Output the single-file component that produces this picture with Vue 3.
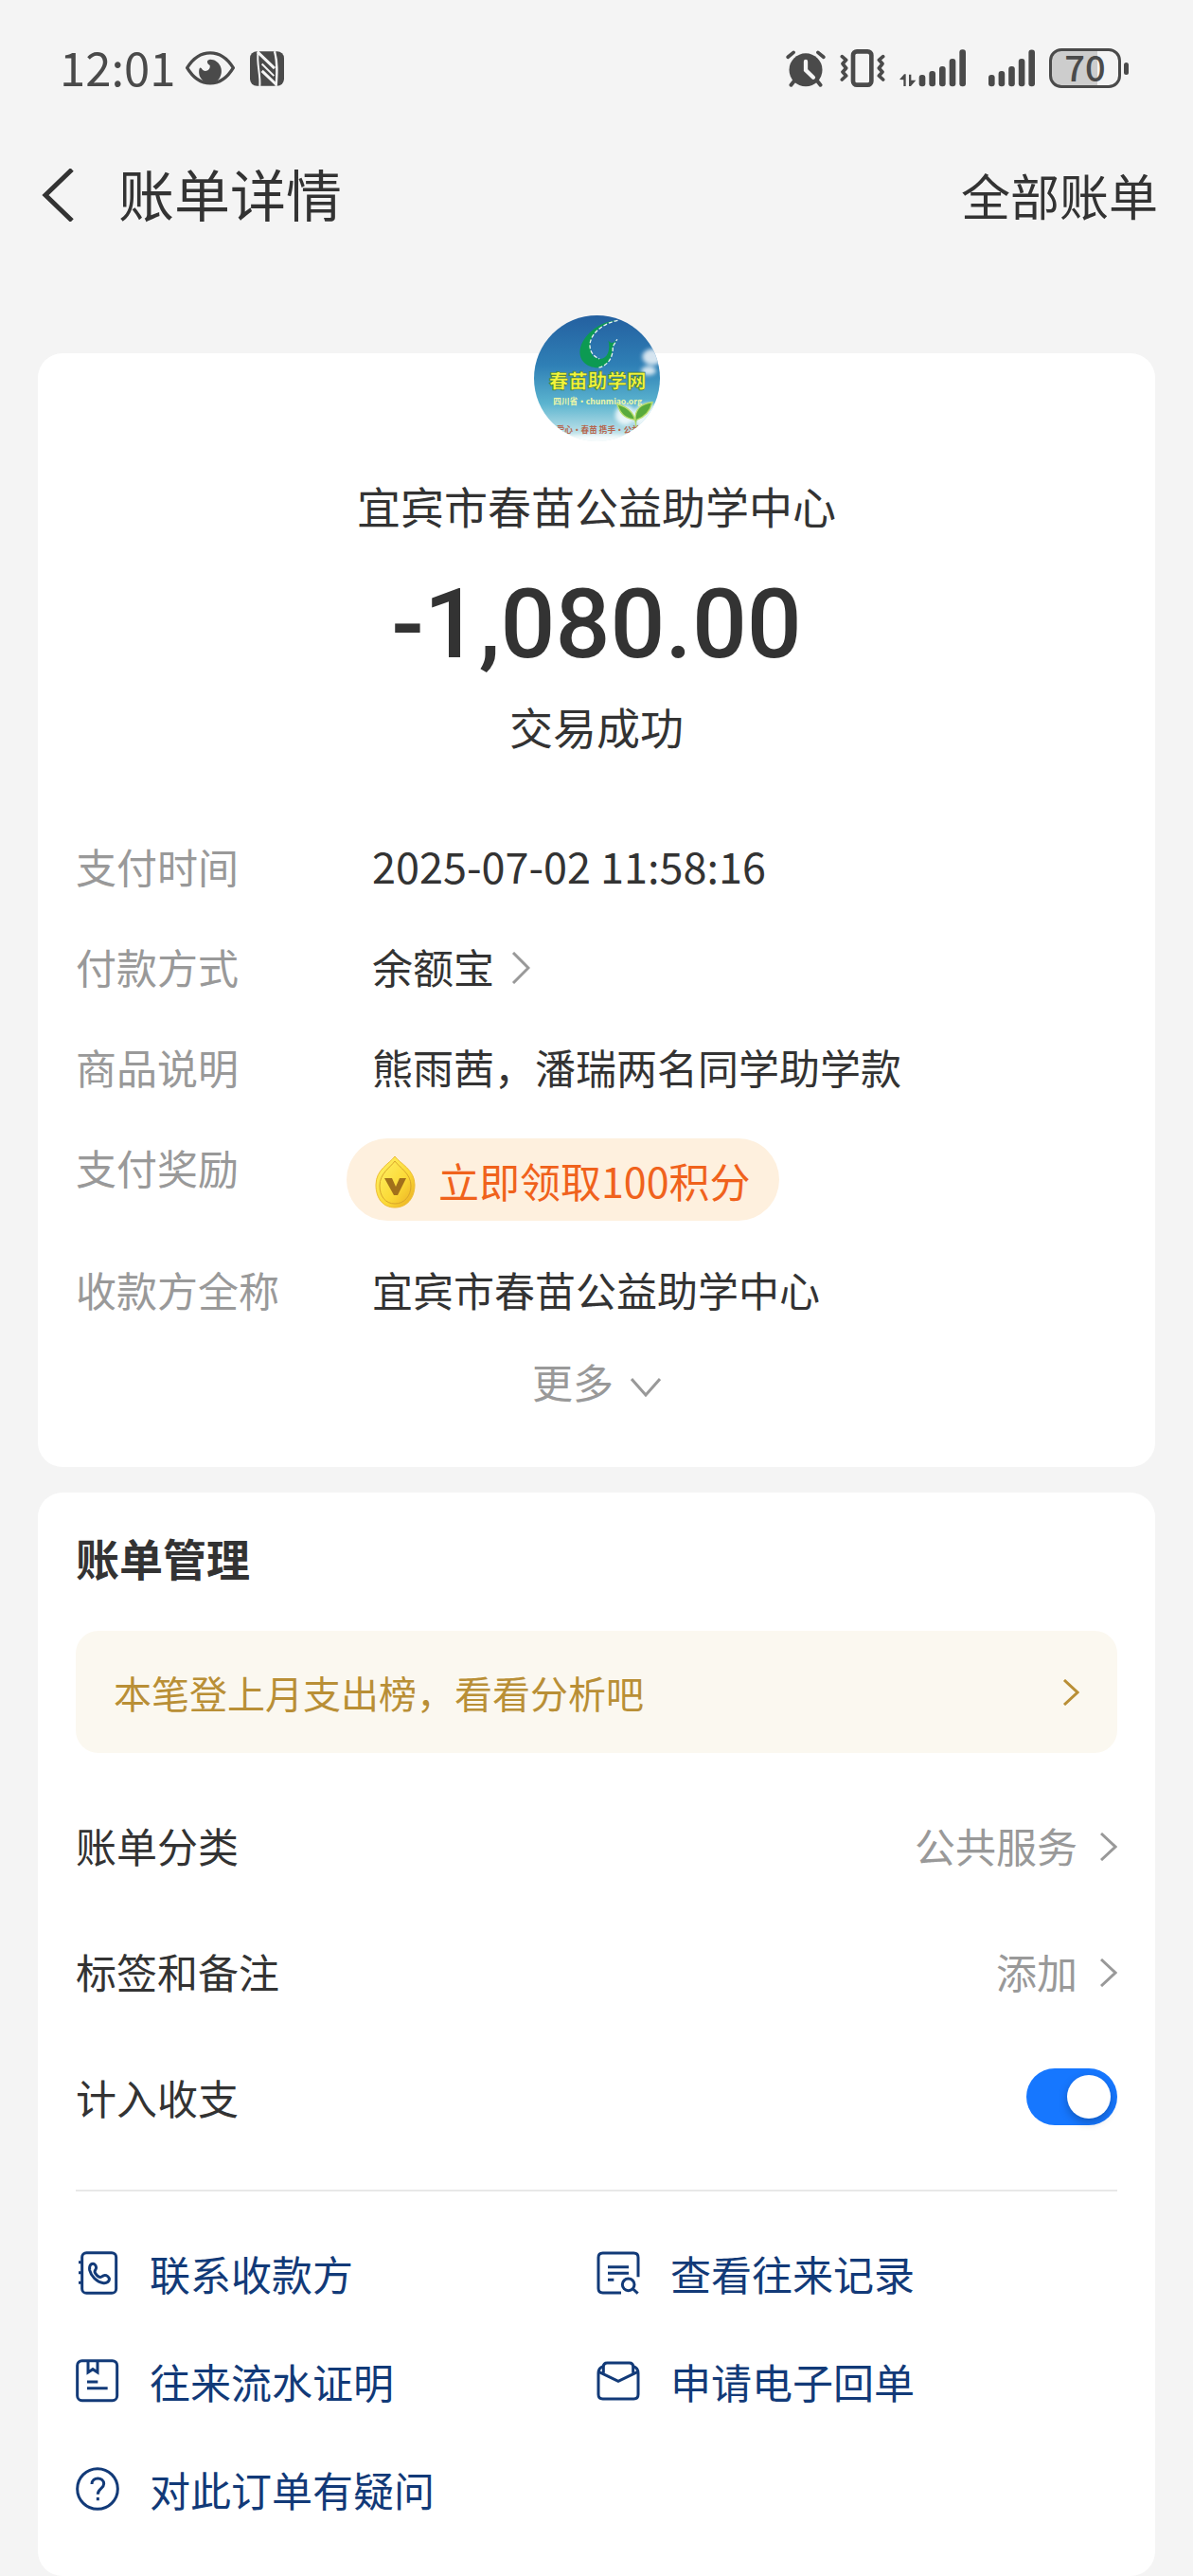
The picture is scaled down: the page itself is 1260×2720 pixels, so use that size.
<template>
  <div class="page">
    <div class="status-bar">
      <div class="status-group">
        <span class="clock">12:01</span>
        <svg class="eye" width="52" height="36" viewBox="0 0 156 108" fill="none">
          <path d="M5 53C44-10 112-10 151 53C112 118 44 118 5 53Z" stroke="#4a4a4a" stroke-width="10" />
          <path d="M78 26C64 28 68 40 77 45C80 62 58 70 50 54C42 46 40 70 46 82C58 106 92 108 106 88C126 60 106 26 78 26Z" fill="#4a4a4a" />
        </svg>
        <svg class="nfc" width="36" height="37" viewBox="0 0 108 110">
          <rect width="108" height="110" rx="22" fill="#4a4a4a" />
          <g fill="none" stroke="#f5f5f5">
            <path d="M26 0C20 40 34 70 31 110" stroke-width="6" />
            <path d="M78 0C88 36 86 70 83 110" stroke-width="7" />
            <path d="M24 2L78 54M38 62L84 106" stroke-width="9" />
            <path d="M38 40L76 78" stroke-width="6" />
          </g>
        </svg>
      </div>
      <div class="status-group right">
        <svg width="42" height="39" viewBox="0 0 126 118" fill="none" stroke="#4a4a4a" stroke-linecap="round">
          <circle cx="63" cy="63" r="53" fill="#4a4a4a" stroke="none" />
          <path d="M6 22L24 7M102 7L120 22" stroke-width="11" />
          <path d="M28 96L16 111M98 96L110 111" stroke-width="12" />
          <path d="M63 36V64L87 87" stroke="#f5f5f5" stroke-width="13" />
        </svg>
        <svg class="vibrate" width="48" height="40" viewBox="0 0 144 120" fill="none" stroke="#4a4a4a">
          <rect x="42" y="7" width="58" height="106" rx="12" stroke-width="14" />
          <g stroke-width="11" stroke-linejoin="round" stroke-linecap="round">
            <path d="M7 23L20 34L9 46L20 60L9 72L20 84L7 96" />
            <path d="M137 23L124 34L135 46L124 60L135 72L124 84L137 96" />
          </g>
        </svg>
        <svg class="signal" width="70" height="40" viewBox="0 0 210 120">
          <path d="M0 96L15 79H20V117H13V97ZM30 80H37V98H52L36 117H30Z" fill="#4a4a4a" />
          <rect v-for="bar in bars" :key="bar.x" :x="bar.x + 62" :y="bar.y" width="20" :height="118 - bar.y" rx="9" fill="#4a4a4a" />
        </svg>
        <svg class="signal-second" width="49" height="40" viewBox="0 0 148 120">
          <rect v-for="bar in bars" :key="bar.x" :x="bar.x" :y="bar.y" width="20" :height="118 - bar.y" rx="9" fill="#4a4a4a" />
        </svg>
        <div class="battery">70</div>
        <span class="battery-tip"></span>
      </div>
    </div>

    <header class="nav-bar">
      <button class="back" aria-label="返回">
        <svg width="34" height="56" viewBox="0 0 34 56" fill="none" stroke="#333" stroke-width="5">
          <path d="M32 1L4 28L32 55" />
        </svg>
      </button>
      <h1>账单详情</h1>
      <a href="#" class="all-bills">全部账单</a>
    </header>

    <main>
      <section class="card summary">
        <svg class="avatar" width="133" height="133" viewBox="0 0 200 200" role="img" aria-label="春苗助学网">
          <defs>
            <linearGradient id="sky" x1="0" y1="0" x2="0" y2="1">
              <stop offset="0" stop-color="#2460a0" />
              <stop offset="0.4" stop-color="#2f80b6" />
              <stop offset="0.7" stop-color="#5bb4cf" />
              <stop offset="1" stop-color="#d9eef0" />
            </linearGradient>
            <clipPath id="round"><circle cx="100" cy="100" r="100" /></clipPath>
            <filter id="soft"><feGaussianBlur stdDeviation="3" /></filter>
          </defs>
          <g clip-path="url(#round)">
            <rect width="200" height="200" fill="url(#sky)" />
            <g fill="#fff" filter="url(#soft)" opacity="0.8">
              <ellipse cx="188" cy="66" rx="16" ry="13" />
              <ellipse cx="182" cy="88" rx="12" ry="7" />
              <circle cx="145" cy="158" r="16" />
              <ellipse cx="180" cy="160" rx="22" ry="20" />
              <ellipse cx="100" cy="198" rx="70" ry="9" />
            </g>
            <path d="M133 8C104 10 82 28 74 50C68 72 86 84 103 83C100 80 96 72 92 62C84 46 92 30 104 20C112 14 122 10 133 8Z" fill="#0c9a52" />
            <path d="M92 62C96 74 100 82 103 83C118 80 124 66 125 50L132 38C126 46 121 44 118 40C122 56 116 70 104 69C98 68 94 66 92 62Z" fill="#0c9a52" />
            <path d="M133 8C112 12 92 26 89 44C87 58 96 66 104 69M103 83C122 78 126 60 125 50L132 38" fill="none" stroke="#e8f5f0" stroke-width="2" stroke-dasharray="6 3" />
            <text x="101" y="116" class="avatar-name">春苗助学网</text>
            <text x="101" y="141" class="avatar-url">四川省·chunmiao.org</text>
            <path d="M162 178C162 158 152 146 132 141C138 160 148 164 161 166C160 150 170 140 188 138C184 154 174 162 163 166" fill="#58aa3c" stroke="#b8dc6c" stroke-width="2" />
            <text x="102" y="187" class="avatar-slogan">爱心·春苗 携手·公益</text>
          </g>
        </svg>
        <p class="payee">宜宾市春苗公益助学中心</p>
        <p class="amount">-1,080.00</p>
        <p class="state">交易成功</p>

        <dl class="details">
          <div class="detail">
            <dt>支付时间</dt>
            <dd class="time">2025-07-02 11:58:16</dd>
          </div>
          <div class="detail">
            <dt>付款方式</dt>
            <dd>
              <button class="method">
                余额宝
                <svg class="arrow" width="20" height="34" viewBox="0 0 20 34" fill="none" stroke="#999" stroke-width="3">
                  <path d="M2 1L18 17L2 33" />
                </svg>
              </button>
            </dd>
          </div>
          <div class="detail">
            <dt>商品说明</dt>
            <dd>熊雨茜，潘瑞两名同学助学款</dd>
          </div>
          <div class="detail">
            <dt>支付奖励</dt>
            <dd>
              <button class="reward">
                <svg class="arrow" width="43" height="56" viewBox="0 0 43 56">
                  <defs>
                    <linearGradient id="gold" x1="0" y1="0" x2="1" y2="1">
                      <stop offset="0" stop-color="#fff36a" />
                      <stop offset="0.6" stop-color="#fbd936" />
                      <stop offset="1" stop-color="#e9aa20" />
                    </linearGradient>
                  </defs>
                  <path d="M21 1C27 9 42 15 42 31C42 46 33 55 21 55C9 55 1 46 1 31C1 15 15 9 21 1Z" fill="url(#gold)" stroke="#eebd35" />
                  <path d="M21 6C26 13 38 19 38 32C38 43 31 51 21 51C11 51 5 43 5 32C5 19 16 13 21 6Z" fill="none" stroke="#d9a52b" />
                  <path d="M10 24H18L22 33L26 24H33L24 42H20Z" fill="#a2701b" />
                </svg>
                立即领取100积分
              </button>
            </dd>
          </div>
          <div class="detail">
            <dt>收款方全称</dt>
            <dd>宜宾市春苗公益助学中心</dd>
          </div>
        </dl>

        <button class="more">
          更多
          <svg class="arrow-down" width="32" height="20" viewBox="0 0 32 20" fill="none" stroke="#999" stroke-width="3">
            <path d="M1 1L16 18L31 1" />
          </svg>
        </button>
      </section>

      <section class="card manage">
        <h2>账单管理</h2>
        <a href="#" class="tip">
          本笔登上月支出榜，看看分析吧
          <svg width="18" height="28" viewBox="0 0 18 28" fill="none" stroke="#b98f36" stroke-width="3">
            <path d="M2 1L16 14L2 27" />
          </svg>
        </a>

        <div v-for="item in settings" :key="item.label" class="setting">
          <span>{{ item.label }}</span>
          <button class="setting-value">
            {{ item.value }}
            <svg class="arrow" width="18" height="30" viewBox="0 0 18 30" fill="none" stroke="#999" stroke-width="3">
              <path d="M1 1L16 15L1 29" />
            </svg>
          </button>
        </div>
        <div class="setting">
          <label for="include">计入收支</label>
          <input id="include" v-model="included" type="checkbox" role="switch" class="switch" />
        </div>

        <nav class="links">
          <a href="#" class="link">
            <svg viewBox="0 0 138 138">
              <rect x="20" y="5" width="108" height="128" rx="14" />
              <path d="M9 35H20M9 68H20M9 100H20" />
              <path d="M48 42C56 36 64 42 65 52C65 60 56 62 62 70C68 79 76 86 84 80C92 72 102 78 106 86C108 96 98 102 88 101C66 98 48 78 44 60C43 52 44 46 48 42Z" />
            </svg>
            联系收款方
          </a>
          <a href="#" class="link">
            <svg viewBox="0 0 138 138">
              <path d="M78 132H20Q6 132 6 118V20Q6 6 20 6H118Q132 6 132 20V82" />
              <path d="M36 50H102M36 70H102M36 91H55" />
              <circle cx="101" cy="106" r="19" />
              <path d="M116 120L131 134" />
            </svg>
            查看往来记录
          </a>
          <a href="#" class="link">
            <svg viewBox="0 0 138 138">
              <rect x="5" y="5" width="126" height="126" rx="15" />
              <path d="M39 5V42L54 32L69 42V5M36 72H70M36 92H101" />
            </svg>
            往来流水证明
          </a>
          <a href="#" class="link">
            <svg viewBox="0 0 138 138">
              <path d="M22 44V24Q22 12 34 12H104Q116 12 116 24V44" />
              <path d="M22 22Q6 28 6 44V112Q6 126 20 126H118Q132 126 132 112V44Q132 28 116 22" />
              <path d="M7 40L69 70L131 40" />
            </svg>
            申请电子回单
          </a>
          <a href="#" class="link">
            <svg viewBox="0 0 138 138">
              <circle cx="69" cy="69" r="64" />
              <path d="M51 54C51 30 89 30 89 53C89 68 70 68 70 86M70 96V106" />
            </svg>
            对此订单有疑问
          </a>
        </nav>
      </section>
    </main>
  </div>
</template>

<script setup>
import { ref } from 'vue';

const included = ref(true);

const settings = [
  { label: '账单分类', value: '公共服务' },
  { label: '标签和备注', value: '添加' }
];

// signal bars, shortest first
const bars = [
  { x: 0, y: 81 },
  { x: 32, y: 69 },
  { x: 64, y: 54 },
  { x: 96, y: 30 },
  { x: 128, y: 1 }
];
</script>

<style>
body {
  background-color: #f4f4f4;
}
</style>

<style scoped>
.page {
  font-family: "Noto Sans CJK SC", sans-serif;
  font-size: 43px;
  line-height: 60px;
  color: #333;
}

h1,
h2,
p,
dl,
dd {
  margin: 0;
}

button {
  padding: 0;
  border: none;
  background: none;
  font: inherit;
  color: inherit;
  cursor: pointer;
}

a {
  color: inherit;
  text-decoration: none;
}

svg {
  flex-shrink: 0;
}

/* Status bar */
.status-bar {
  display: flex;
  justify-content: space-between;
  align-items: center;
  height: 144px;
  padding: 0 68px 0 63px;
  color: #4a4a4a;
}

.status-group {
  display: flex;
  align-items: center;
}

.clock {
  padding-bottom: 4px;
  font-size: 49px;
}

.eye {
  margin-left: 11px;
}

.nfc {
  margin-left: 16px;
}

.vibrate {
  margin-left: 15px;
}

.signal {
  margin-left: 15px;
}

.signal-second {
  margin-left: 24px;
}

.battery {
  box-sizing: border-box;
  width: 76px;
  height: 42px;
  margin-left: 15px;
  border: 3px solid #4a4a4a;
  border-radius: 13px;
  background: linear-gradient(90deg, #cdcdcd 69%, transparent 69%);
  font-size: 38px;
  font-weight: 500;
  line-height: 32px;
  text-align: center;
}

.battery-tip {
  width: 5px;
  height: 13px;
  margin-left: 3px;
  border-radius: 3px;
  background-color: #4a4a4a;
}

/* Title bar */
.nav-bar {
  display: flex;
  align-items: center;
  height: 124px;
  padding: 0 37px 0 44px;
}

.back {
  display: flex;
}

h1 {
  margin-left: 47px;
  padding-bottom: 4px;
  font-size: 59px;
  font-weight: 400;
}

.all-bills {
  margin-left: auto;
  font-size: 52px;
}

/* Cards */
main {
  padding: 105px 40px 2px;
}

.card {
  padding: 0 40px;
  border-radius: 26px;
  background-color: #fff;
}

.summary {
  display: flex;
  flex-direction: column;
  align-items: center;
  padding-bottom: 61px;
}

.avatar {
  margin-top: -40px;
}

.avatar-name {
  fill: #f2f43a;
  stroke: #3f7a3a;
  stroke-width: 1px;
  font-size: 31px;
  font-weight: 900;
  text-anchor: middle;
}

.avatar-url {
  fill: #eef7a8;
  font-size: 13px;
  font-weight: 700;
  text-anchor: middle;
}

.avatar-slogan {
  fill: #b5664e;
  font-size: 13px;
  font-weight: 700;
  text-anchor: middle;
}

.payee,
.state {
  font-size: 46px;
}

.payee {
  margin-top: 37px;
}

.amount {
  margin-top: 36px;
  font-family: Roboto, sans-serif;
  font-size: 102px;
  font-weight: 500;
  line-height: 120px;
}

.state {
  margin-top: 17px;
}

.details {
  display: flex;
  flex-direction: column;
  gap: 46px;
  width: 100%;
  margin-top: 88px;
}

.detail {
  display: flex;
  align-items: flex-start;
}

dt {
  width: 313px;
  flex-shrink: 0;
  color: #999;
}

.time {
  font-size: 45px;
}

.method,
.more {
  display: flex;
  align-items: center;
  gap: 18px;
}

.arrow {
  margin-top: 4px;
}

.arrow-down {
  margin-top: 14px;
}

.reward {
  display: flex;
  align-items: center;
  gap: 24px;
  height: 87px;
  margin-left: -27px;
  margin-bottom: -4px;
  padding: 0 30px;
  border-radius: 44px;
  background-color: #fef0de;
  color: #f0621c;
}

.more {
  margin-top: 37px;
  color: #999;
}

.manage {
  margin-top: 27px;
  padding-top: 38px;
  padding-bottom: 62px;
}

h2 {
  font-size: 46px;
  font-weight: 700;
}

.tip {
  display: flex;
  justify-content: space-between;
  align-items: center;
  height: 129px;
  margin: 48px 0 30px;
  padding: 0 40px;
  border-radius: 24px;
  background-color: #fbf8f0;
  font-size: 40px;
  color: #b98f36;
}

.setting {
  display: flex;
  justify-content: space-between;
  align-items: center;
  height: 133px;
}

.setting-value {
  display: flex;
  align-items: center;
  gap: 24px;
  color: #999;
}

.switch {
  appearance: none;
  width: 96px;
  height: 60px;
  margin: 0;
  padding: 7px;
  box-sizing: border-box;
  border-radius: 30px;
  background-color: #ccc;
  cursor: pointer;
}

.switch::before {
  content: "";
  display: block;
  width: 46px;
  height: 46px;
  border-radius: 50%;
  background-color: #fff;
  box-shadow: 0 4px 10px rgba(0, 0, 0, 0.25);
}

.switch:checked {
  background-color: #1677ff;
}

.switch:checked::before {
  margin-left: auto;
}

.links {
  display: grid;
  grid-template-columns: 1fr 1fr;
  row-gap: 54px;
  margin-top: 32px;
  padding-top: 56px;
  border-top: 2px solid #e8e8e8;
}

.link {
  display: flex;
  align-items: center;
  gap: 32px;
  color: #123a78;
}

.link svg {
  width: 46px;
  height: 46px;
  fill: none;
  stroke: #123a78;
  stroke-width: 9px;
}
</style>
